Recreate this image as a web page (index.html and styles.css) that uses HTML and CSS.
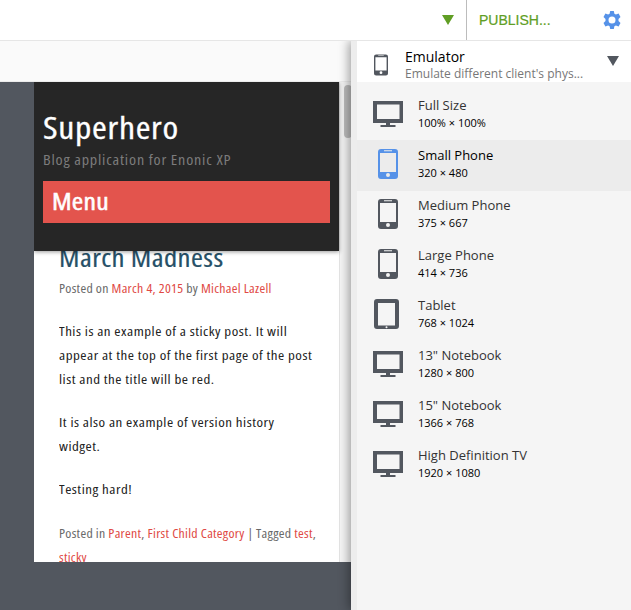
FILE: index.html
```html
<!DOCTYPE html>
<html lang="en">
<head>
<meta charset="utf-8">
<title>Emulator</title>
<link rel="stylesheet" href="styles.css">
</head>
<body>
<svg class="defs" aria-hidden="true">
  <symbol id="monitor" viewBox="0 0 30 28"><path fill-rule="evenodd" d="M0 1h30v22H17v2h5.500v2H7.500v-2H13v-2H0zM4 4.500v14.500h22.500V4.500z"/></symbol>
  <symbol id="phone" viewBox="0 0 20 30"><path fill-rule="evenodd" d="M3 0h14q3 0 3 3v24q0 3-3 3H3q-3 0-3-3V3q0-3 3-3zM2 4v19h16V4zM6 1.300v1h8v-1zM10 24a2 2 0 1 0 0 4a2 2 0 1 0 0-4z"/></symbol>
  <symbol id="tablet" viewBox="0 0 25 30"><path fill-rule="evenodd" d="M3 0h19q3 0 3 3v24q0 3-3 3H3q-3 0-3-3V3q0-3 3-3zM4 4v22.500h17V4zM12.500 27.300a1 1 0 1 0 0 2a1 1 0 1 0 0-2z"/></symbol>
</svg>
<div class="app">
  <header class="toolbar">
    <svg class="arrow green" viewBox="0 0 12 10"><path d="M0 0h12L6 10z"/></svg>
    <button class="publish">PUBLISH...</button>
    <svg class="gear" viewBox="0 0 18 18"><path fill-rule="evenodd" d="M7.200 0h3.600l.6 2.700 1.500.9 2.700-1 1.900 3.300-2 2v2.200l2 2-1.900 3.300-2.700-1-1.500.9-.6 2.700H7.200l-.6-2.700-1.500-.9-2.700 1L.5 12.100l2-2V7.900l-2-2 1.900-3.300 2.700 1 1.500-.9zM9 5.500a3.500 3.500 0 1 0 0 7a3.500 3.500 0 1 0 0-7z"/></svg>
  </header>
  <div class="main">
    <section class="workspace">
      <div class="subbar"></div>
      <div class="device">
        <div class="site">
          <header class="masthead">
            <h1 class="wide">Superhero</h1>
            <p class="tagline wide">Blog application for Enonic XP</p>
            <div class="menu"><div class="wide">Menu</div></div>
          </header>
          <article class="post">
            <h2 class="wide">March Madness</h2>
            <p class="meta wide">Posted on <a>March 4, 2015</a> by <a>Michael Lazell</a></p>
            <p class="copy wide">This is an example of a sticky post. It will<br>appear at the top of the first page of the post<br>list and the title will be red.</p>
            <p class="copy wide">It is also an example of version history<br>widget.</p>
            <p class="copy wide">Testing hard!</p>
            <p class="meta tags wide">Posted in <a>Parent</a>, <a>First Child Category</a> | Tagged <a>test</a>,<br><a>sticky</a></p>
          </article>
        </div>
        <div class="track"><div class="thumb"></div></div>
      </div>
    </section>
    <aside class="panel">
      <div class="panel-head">
        <svg class="head-icon"><use href="#phone"/></svg>
        <div class="head-text"><h3>Emulator</h3><p>Emulate different client's phys...</p></div>
        <svg class="arrow dark" viewBox="0 0 12 10"><path d="M0 0h12L6 10z"/></svg>
      </div>
      <ul class="sizes">
        <li><span class="ico"><svg class="monitor"><use href="#monitor"/></svg></span><div><h4>Full Size</h4><p>100% × 100%</p></div></li>
        <li class="selected"><span class="ico"><svg class="phone"><use href="#phone"/></svg></span><div><h4>Small Phone</h4><p>320 × 480</p></div></li>
        <li><span class="ico"><svg class="phone"><use href="#phone"/></svg></span><div><h4>Medium Phone</h4><p>375 × 667</p></div></li>
        <li><span class="ico"><svg class="phone"><use href="#phone"/></svg></span><div><h4>Large Phone</h4><p>414 × 736</p></div></li>
        <li><span class="ico"><svg class="tablet"><use href="#tablet"/></svg></span><div><h4>Tablet</h4><p>768 × 1024</p></div></li>
        <li><span class="ico"><svg class="monitor"><use href="#monitor"/></svg></span><div><h4>13" Notebook</h4><p>1280 × 800</p></div></li>
        <li><span class="ico"><svg class="monitor"><use href="#monitor"/></svg></span><div><h4>15" Notebook</h4><p>1366 × 768</p></div></li>
        <li><span class="ico"><svg class="monitor"><use href="#monitor"/></svg></span><div><h4>High Definition TV</h4><p>1920 × 1080</p></div></li>
      </ul>
    </aside>
  </div>
</div>
</body>
</html>
```

FILE: styles.css
```css
* { box-sizing: border-box; }
body, h1, h2, h3, h4, p, ul { margin: 0; padding: 0; font-weight: 400; }
body { font-family: "Open Sans", sans-serif; overflow: hidden; }
.defs { display: none; }
.app { width: 631px; height: 610px; display: flex; flex-direction: column; }

.toolbar { height: 41px; flex: none; display: flex; align-items: center; justify-content: flex-end; background: #fff; border-bottom: 1px solid #e6e6e6; }
.arrow { width: 12px; height: 10px; flex: none; }
.green { fill: #609e24; margin-right: 12px; }
.publish { height: 40px; width: 137px; padding: 0 0 0 12px; border: 0; border-left: 1px solid #bcbcbc; background: none; text-align: left; color: #609e24; font: 14px "Liberation Sans", Arial, sans-serif; letter-spacing: 0; -webkit-text-stroke: 0.2px; }
.gear { width: 18px; height: 18px; fill: #5692e8; margin-right: 10px; }

.main { flex: 1; display: flex; min-height: 0; }
.workspace { width: 351px; background: #52575f; }
.subbar { height: 41px; background: #fafafa; border-bottom: 1px solid #ececec; }
.device { margin-left: 34px; width: 317px; height: 480px; display: flex; background: #fff; overflow: hidden; }
.site { width: 305px; font-family: "Open Sans", sans-serif; font-stretch: 75%; white-space: nowrap; }
.wide { width: max-content; transform: scaleX(1.15); transform-origin: 0 50%; }
.masthead { position: relative; z-index: 1; height: 169px; padding: 28px 9px 0; background: #262626; box-shadow: 0 1px 4px rgba(0,0,0,.4); }
h1 { height: 36px; line-height: 34px; font-size: 31px; color: #fff; letter-spacing: 0.6px; -webkit-text-stroke: 0.3px; }
.tagline { height: 28px; line-height: 28px; font-size: 14px; color: #7c7c7c; margin-bottom: 7px; letter-spacing: 0.7px; }
.menu { height: 42px; line-height: 40px; padding-left: 9px; background: #e3544d; color: #fff; font-size: 24px; letter-spacing: 0.2px; -webkit-text-stroke: 0.5px; }
.post { padding: 0 0 0 25px; color: #222; }
h2 { height: 32px; line-height: 32px; margin-top: -10px; font-size: 25px; color: #265067; letter-spacing: 0.4px; -webkit-text-stroke: 0.2px; }
.meta { height: 32px; line-height: 32px; font-size: 12px; color: #686868; margin-bottom: 14px; letter-spacing: 0.25px; }
.meta a { color: #e04944; }
.copy { font-size: 13px; line-height: 24px; margin-bottom: 19px; letter-spacing: 0.44px; }
.tags { height: 48px; line-height: 24px; margin: 21px 0 0; }
.track { width: 12px; padding: 3px 0 0 4px; background: #f5f5f5; border-left: 1px solid #e4e4e4; }
.thumb { width: 8px; height: 53px; border-radius: 4px; background: #bcbcbc; }

.panel { position: relative; z-index: 2; flex: 1; border-left: 6px solid #ededed; background: #f5f5f5; box-shadow: -2px 0 10px rgba(0,0,0,.38); clip-path: inset(0 0 0 -16px); }
.panel-head { height: 41px; display: flex; background: #fff; }
.head-icon { width: 14px; height: 22px; fill: #52575f; margin: 13px 17px 0; }
.head-text { width: 178px; padding-top: 6px; }
h3 { font-size: 14px; line-height: 20px; color: #000; }
.head-text p { font-size: 12px; line-height: 14px; color: #777; white-space: nowrap; }
.dark { fill: #52575f; margin: 15px 0 0 24px; }
.sizes { list-style: none; padding-top: 8px; }
.sizes li { height: 50px; display: flex; }
.sizes .selected { background: #ececec; box-shadow: 0 1px #ececec; }
.ico { width: 30px; margin: 9px 15px 0 16px; display: flex; justify-content: center; fill: #52575f; }
.selected .ico { fill: #5692e8; }
.monitor { width: 30px; height: 28px; margin-top: 1px; }
.phone { width: 20px; height: 30px; }
.tablet { width: 25px; height: 30px; margin-right: 3px; }
h4 { font-size: 13px; line-height: 18px; padding-top: 6px; color: #333; }
.selected h4 { color: #000; }
li p { font-size: 11px; line-height: 18px; color: #000; }
```
